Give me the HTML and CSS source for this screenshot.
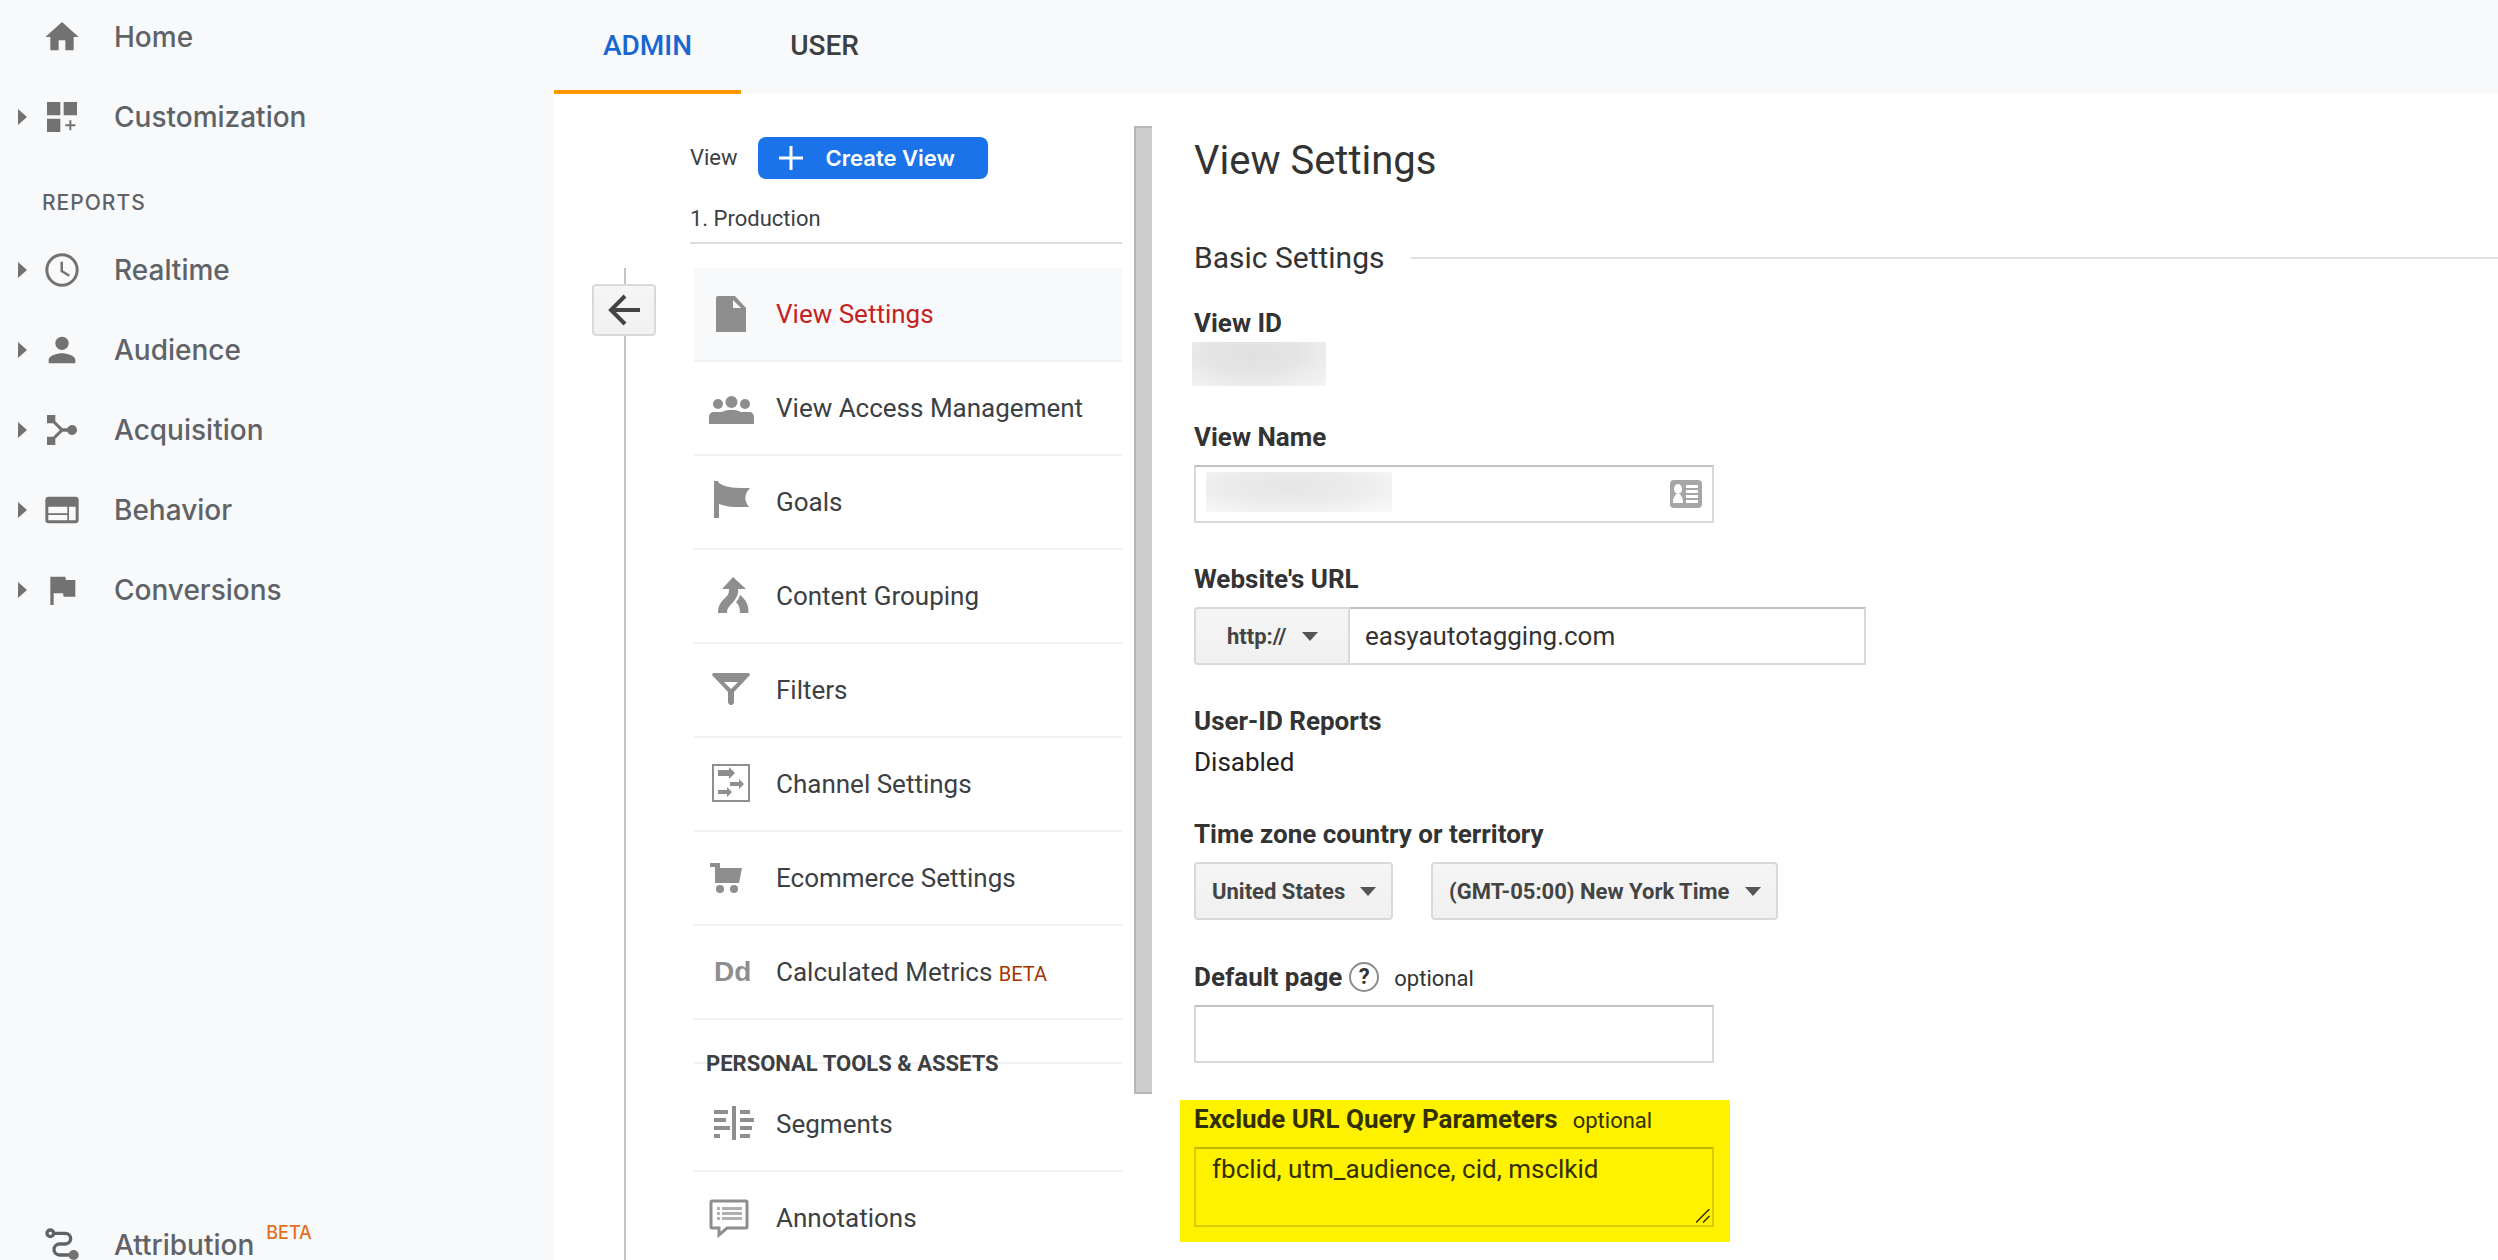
FILE: index.html
```html
<!DOCTYPE html>
<html lang="en">
<head>
<meta charset="utf-8">
<meta name="viewport" content="width=device-width, initial-scale=1">
<title>View Settings</title>
<link rel="stylesheet" href="styles.css">
</head>
<body>
<div class="app">
  <nav class="sidebar" aria-label="Reports">
    <a class="nav-item" href="#home">
      <span class="nav-caret"></span>
      <svg class="nav-icon" viewBox="0 0 24 24"><path d="M10 20v-6h4v6h5v-8h3L12 3 2 12h3v8z"/></svg>
      <span>Home</span>
    </a>
    <a class="nav-item" href="#customization">
      <span class="nav-caret nav-caret-on"></span>
      <svg class="nav-icon" viewBox="0 0 24 24"><path d="M3 3h8v8H3zM13 3h8v8h-8zM3 13h8v8H3zM16.400 14h1.200v2.400H20v1.200h-2.400V20h-1.200v-2.400H14v-1.200h2.400z"/></svg>
      <span>Customization</span>
    </a>
    <h2 class="nav-heading">REPORTS</h2>
    <a class="nav-item" href="#realtime">
      <span class="nav-caret nav-caret-on"></span>
      <svg class="nav-icon" viewBox="0 0 24 24"><path d="M12 2a10 10 0 1 0 0 20 10 10 0 0 0 0-20zm0 18.200a8.200 8.200 0 1 1 0-16.400 8.200 8.200 0 0 1 0 16.400zM12.600 7h-1.500v6l4.900 3 .8-1.200-4.200-2.500z"/></svg>
      <span>Realtime</span>
    </a>
    <a class="nav-item" href="#audience">
      <span class="nav-caret nav-caret-on"></span>
      <svg class="nav-icon" viewBox="0 0 24 24"><path d="M12 12a4 4 0 1 0 0-8 4 4 0 0 0 0 8zm0 2c-2.700 0-8 1.300-8 4v2h16v-2c0-2.700-5.300-4-8-4z"/></svg>
      <span>Audience</span>
    </a>
    <a class="nav-item" href="#acquisition">
      <span class="nav-caret nav-caret-on"></span>
      <svg class="nav-icon" viewBox="0 0 24 24"><path d="M3 3h5v3.800L12.300 11h2.900a3 3 0 1 1 0 2h-2.900L8 17.200V21H3v-5h3.700l4-4-4-4H3z"/></svg>
      <span>Acquisition</span>
    </a>
    <a class="nav-item" href="#behavior">
      <span class="nav-caret nav-caret-on"></span>
      <svg class="nav-icon" viewBox="0 0 24 24"><path fill-rule="evenodd" d="M4 4h16a2 2 0 0 1 2 2v12a2 2 0 0 1-2 2H4a2 2 0 0 1-2-2V6a2 2 0 0 1 2-2zm-.2 6v4h11.400v-4zm0 5v3.200h11.400V15zM16.200 10v8.200h4V10z"/></svg>
      <span>Behavior</span>
    </a>
    <a class="nav-item" href="#conversions">
      <span class="nav-caret nav-caret-on"></span>
      <svg class="nav-icon" viewBox="0 0 24 24"><path d="M14.400 6 14 4H5v17h2v-7h5.600l.4 2h7V6z"/></svg>
      <span>Conversions</span>
    </a>
    <a class="nav-item nav-item-last" href="#attribution">
      <span class="nav-caret"></span>
      <svg class="nav-icon" viewBox="0 0 24 24"><g fill="none" stroke="currentColor" stroke-width="2"><circle cx="5" cy="5" r="2"/><path d="M7.500 5h6.500a3.200 3.200 0 0 1 0 6.400h-3.500a3.300 3.300 0 0 0 0 6.600H18"/></g><circle cx="19" cy="18" r="3"/></svg>
      <span>Attribution</span>
      <sup class="nav-beta">BETA</sup>
    </a>
  </nav>

  <main class="main">
    <header class="tabs">
      <a class="tab tab-active" href="#admin">ADMIN</a>
      <a class="tab" href="#user">USER</a>
    </header>

    <div class="content">
      <div class="rail">
        <button class="back" type="button" aria-label="Back">
          <svg class="back-icon" viewBox="0 0 36 34"><path d="M34 17H5M19 3 5 17l14 14" fill="none" stroke="currentColor" stroke-width="4"/></svg>
        </button>
      </div>

      <section class="column">
        <div class="column-head">
          <span>View</span>
          <button class="create" type="button">
            <svg class="create-icon" viewBox="0 0 24 24"><path d="M12 0v24M0 12h24" stroke="currentColor" stroke-width="3"/></svg>
            Create View
          </button>
        </div>
        <div class="view-name">1. Production</div>

        <div class="menu">
          <a class="menu-item menu-item-active" href="#view-settings">
            <svg class="menu-icon" viewBox="0 0 56 44"><path fill-rule="evenodd" d="M14 4h17l11 12v24H12V6a2 2 0 0 1 2-2zm15 4v8h8z"/></svg>
            <span>View Settings</span>
          </a>
          <a class="menu-item" href="#access">
            <svg class="menu-icon" viewBox="0 0 56 44"><circle cx="14" cy="18" r="5"/><circle cx="41" cy="18" r="5"/><circle cx="27.500" cy="16" r="6"/><path d="M5 38v-7c0-3 2-5 5-5h8c6-3 13-3 19 0h8c3 0 5 2 5 5v7z"/></svg>
            <span>View Access Management</span>
          </a>
          <a class="menu-item" href="#goals">
            <svg class="menu-icon" viewBox="0 0 56 44"><path d="M10 1h4l1 2c8 5 16 5 31 5-6 6-6 13-1 19-12 0-20 1-30-3v14h-5z"/></svg>
            <span>Goals</span>
          </a>
          <a class="menu-item" href="#content-grouping">
            <svg class="menu-icon" viewBox="0 0 56 44"><path d="m29 3 13 12h-8c1 4-1 8-4 12-4 5-7 6-7 12h-9c0-9 4-12 8-16 3-3 3-5 3-8h-7zM36 21c6 5 8.500 9 8.500 18H36c0-5-1-8-4-11 2-2 3-4 4-7z"/></svg>
            <span>Content Grouping</span>
          </a>
          <a class="menu-item" href="#filters">
            <svg class="menu-icon" viewBox="0 0 56 44"><path fill-rule="evenodd" d="M9 5h36l1 2-16 17v11l-2 2h-2l-2-2V24L8 7zm11 9 7 7 7-7z"/></svg>
            <span>Filters</span>
          </a>
          <a class="menu-item" href="#channels">
            <svg class="menu-icon" viewBox="0 0 56 44"><path d="M9 3h36v36H9z" fill="none" stroke="currentColor" stroke-width="2"/><path d="M14 8h11V5l6 6-6 6v-3H14zM26 20h9v-3l5 5-5 5v-3h-9zM14 28h9v-3l5 5-5 5v-3h-9z"/></svg>
            <span>Channel Settings</span>
          </a>
          <a class="menu-item" href="#ecommerce">
            <svg class="menu-icon" viewBox="0 0 56 44"><path d="M6 7h10v5h22l-3 15H11V11H6z"/><circle cx="16" cy="33" r="4"/><circle cx="30" cy="33" r="4"/></svg>
            <span>Ecommerce Settings</span>
          </a>
          <a class="menu-item" href="#metrics">
            <span class="menu-icon menu-glyph" aria-hidden="true">Dd</span>
            <span>Calculated Metrics <span class="menu-beta">BETA</span></span>
          </a>
          <h3 class="menu-heading"><span class="menu-heading-text">PERSONAL TOOLS &amp; ASSETS</span></h3>
          <a class="menu-item" href="#segments">
            <svg class="menu-icon" viewBox="0 0 56 44"><path d="M28 4h4v34h-4zM10 8h14v4H10zM10 16h12v4H10zM10 24h16v4H10zM10 32h6v4h-6zM36 8h10v4H36zM36 16h14v4H36zM36 24h12v4H36zM36 32h10v4H36z"/></svg>
            <span>Segments</span>
          </a>
          <a class="menu-item" href="#annotations">
            <svg class="menu-icon" viewBox="0 0 56 44"><path d="M8 5h34a1 1 0 0 1 1 1v25a1 1 0 0 1-1 1H23l-8 7v-7H8a1 1 0 0 1-1-1V6a1 1 0 0 1 1-1z" fill="none" stroke="currentColor" stroke-width="3"/><path fill="#b0b0b0" d="M13 11h3v3h-3zM18 11h20v3H18zM13 16h3v3h-3zM18 16h20v3H18zM13 21h3v3h-3zM18 21h20v3H18z"/></svg>
            <span>Annotations</span>
          </a>
        </div>
      </section>

      <div class="divider"></div>

      <form class="settings">
        <h1 class="title">View Settings</h1>
        <h2 class="section-title">Basic Settings</h2>

        <div class="field field-id">
          <div class="label">View ID</div>
          <div class="redacted redacted-id"></div>
        </div>

        <div class="field">
          <label class="label" for="view-name">View Name</label>
          <div class="input-wrap">
            <input class="input" id="view-name" type="text">
            <span class="redacted redacted-name"></span>
            <svg class="card-icon" viewBox="0 0 32 28"><rect width="32" height="28" rx="4" fill="#a6a6a6"/><g fill="#fff"><ellipse cx="8" cy="9" rx="4" ry="5"/><path d="M3 23c0-6 2-7 3-9h4c1 2 3 3 3 9zM16 5h12v3H16zM16 10h12v3H16zM16 15h12v3H16zM16 20h12v3H16z"/></g></svg>
          </div>
        </div>

        <div class="field">
          <label class="label" for="site-url">Website's URL</label>
          <div class="url-row">
            <span class="select-wrap">
              <select class="select select-protocol" aria-label="Protocol"><option>http://</option></select>
            </span>
            <input class="input input-url" id="site-url" type="text" value="easyautotagging.com">
          </div>
        </div>

        <div class="field">
          <div class="label">User-ID Reports</div>
          <div class="value">Disabled</div>
        </div>

        <div class="field field-zone">
          <label class="label" for="country">Time zone country or territory</label>
          <div class="zone-row">
            <span class="select-wrap">
              <select class="select" id="country"><option>United States</option></select>
            </span>
            <span class="select-wrap">
              <select class="select" aria-label="Time zone"><option>(GMT-05:00) New York Time</option></select>
            </span>
          </div>
        </div>

        <div class="field field-page">
          <div class="label-row">
            <label class="label" for="default-page">Default page</label>
            <button class="help" type="button" aria-label="Help">?</button>
            <span class="optional">optional</span>
          </div>
          <input class="input" id="default-page" type="text">
        </div>

        <div class="highlight">
          <div class="label-row">
            <label class="label" for="exclude">Exclude URL Query Parameters</label>
            <span class="optional">optional</span>
          </div>
          <div class="input-wrap">
            <textarea class="input textarea" id="exclude">fbclid, utm_audience, cid, msclkid</textarea>
            <svg class="grip" viewBox="0 0 14 14"><path d="M0 13.500 13.500 0M7 13.500 13.500 7" stroke="currentColor" stroke-width="1.500"/></svg>
          </div>
        </div>
      </form>
    </div>
  </main>
</div>
</body>
</html>
```
FILE: styles.css
```css
* {
  box-sizing: border-box;
}

body {
  margin: 0;
  height: 100vh;
  overflow: hidden;
  background: #fff;
  color: #3c4043;
  font-family: Roboto, "Liberation Sans", sans-serif;
  font-size: 26px;
  line-height: 32px;
}

a {
  color: inherit;
  text-decoration: none;
}

button,
input,
select,
textarea {
  margin: 0;
  font-family: inherit;
}

h1,
h2,
h3 {
  margin: 0;
}

.app {
  display: flex;
  min-height: 100vh;
}

/* Sidebar */

.sidebar {
  display: flex;
  flex: none;
  flex-direction: column;
  gap: 28px;
  width: 554px;
  height: calc(100vh + 11px);
  padding-top: 11px;
  background: #f8f9fb;
  color: #5f6368;
  font-family: Inter, "Open Sans", sans-serif;
}

.nav-item {
  display: flex;
  flex: none;
  align-items: center;
  height: 52px;
  font-size: 28px;
  font-weight: 500;
}

.nav-caret {
  width: 24px;
  margin-left: 18px;
}

.nav-caret-on::before {
  display: block;
  width: 0;
  border-top: 8px solid transparent;
  border-bottom: 8px solid transparent;
  border-left: 9px solid #727272;
  content: "";
}

.nav-icon {
  width: 40px;
  height: 40px;
  margin-right: 32px;
  color: #5f6368;
  fill: #727272;
}

.nav-heading {
  margin: 19px 0 0 42px;
  font-size: 21px;
  font-weight: 500;
  line-height: 26px;
  letter-spacing: 1px;
}

.nav-item-last {
  margin-top: auto;
}

.nav-beta {
  align-self: flex-start;
  margin-left: 12px;
  color: #e37020;
  font-size: 18px;
  line-height: 28px;
}

/* Tabs */

.main {
  flex: 1;
  min-width: 0;
}

.tabs {
  display: flex;
  height: 94px;
  background: #f8f9fb;
}

.tab {
  padding: 30px 49px 0;
  border-bottom: 4px solid transparent;
  font-size: 28px;
  font-weight: 500;
}

.tab-active {
  border-color: #ff9800;
  color: #1967d2;
}

.content {
  display: flex;
  min-height: calc(100vh - 94px);
}

/* Back rail */

.rail {
  flex: none;
  width: 64px;
  margin: 174px 34px 0 38px;
  padding-top: 16px;
  background: linear-gradient(#c4c4c4, #c4c4c4) 32px 0 / 2px 100% no-repeat;
}

.back {
  display: flex;
  align-items: center;
  justify-content: center;
  width: 64px;
  height: 52px;
  padding: 0;
  border: 2px solid #d9d9d9;
  border-radius: 4px;
  background: linear-gradient(#f5f5f5, #f1f1f1);
  color: #444;
}

.back-icon {
  width: 36px;
  height: 34px;
}

/* View column */

.column {
  flex: none;
  width: 432px;
  padding-top: 43px;
}

.column-head {
  display: flex;
  align-items: center;
  gap: 20px;
  font-size: 22px;
}

.create {
  display: flex;
  align-items: center;
  gap: 23px;
  height: 42px;
  padding: 0 33px 0 21px;
  border: 0;
  border-radius: 8px;
  background: #1a73e8;
  color: #fff;
  font-family: Inter, "Open Sans", sans-serif;
  font-size: 22px;
  font-weight: 600;
}

.create-icon {
  width: 24px;
  height: 24px;
}

.view-name {
  margin-top: 27px;
  padding-bottom: 10px;
  border-bottom: 2px solid #dadce0;
  font-size: 22px;
  line-height: 26px;
}

.menu {
  margin: 24px 0 0 4px;
}

.menu-item {
  display: flex;
  align-items: center;
  gap: 16px;
  height: 94px;
  padding-left: 10px;
  border-bottom: 2px solid #f1f1f2;
}

.menu-item-active {
  background: #f8f9fb;
  color: #c5221f;
}

.menu-icon {
  flex: none;
  width: 56px;
  height: 44px;
  color: #8e8e8e;
  fill: #8e8e8e;
}

.menu-glyph {
  padding-left: 10px;
  font-family: "Liberation Sans", sans-serif;
  font-size: 28px;
  font-weight: 700;
  line-height: 44px;
}

.menu-beta {
  color: #a63300;
  font-size: 20px;
  line-height: 20px;
}

.menu-heading {
  padding: 31px 0 1px;
  font-size: 22px;
  font-weight: 700;
  line-height: 26px;
}

.menu-heading-text {
  display: block;
  padding-left: 12px;
  background: linear-gradient(#f1f1f2, #f1f1f2) 0 11px / 100% 2px no-repeat;
}

.divider {
  flex: none;
  width: 18px;
  height: 968px;
  margin: 32px 42px 0 12px;
  border: 2px solid #b7b7b7;
  border-right: 0;
  background: #cdcdcd;
}

/* Settings form */

.settings {
  flex: 1;
  min-width: 0;
  padding-top: 43px;
  color: #333;
}

.title {
  font-size: 40px;
  font-weight: 400;
  line-height: 48px;
}

.section-title {
  display: flex;
  align-items: center;
  gap: 27px;
  margin: 55px 0 31px;
  font-size: 30px;
  font-weight: 400;
  line-height: 36px;
}

.section-title::after {
  flex: 1;
  height: 2px;
  background: #e0e0e0;
  content: "";
}

.field {
  margin-bottom: 40px;
}

.field-id {
  margin-bottom: 35px;
}

.field-zone {
  margin-bottom: 41px;
}

.field-page {
  margin-bottom: 37px;
}

.label {
  display: block;
  font-weight: 700;
}

.label-row {
  display: flex;
  align-items: baseline;
  height: 32px;
}

.optional {
  margin-left: 15px;
  font-size: 22px;
}

.value {
  margin-top: 9px;
  color: #222;
}

.redacted-id {
  width: 134px;
  height: 44px;
  margin: 3px 0 0 -2px;
  background: radial-gradient(ellipse at 45% 25%, #e0e0e0, #e5e5e5 45%, #f5f5f5);
}

.input-wrap {
  display: flow-root;
  position: relative;
  width: 520px;
  max-width: 100%;
}

.redacted-name {
  position: absolute;
  top: 19px;
  left: 12px;
  width: 186px;
  height: 40px;
  background: radial-gradient(ellipse at 45% 35%, #e6e6e6, #ebebeb 45%, #fafafa);
}

.card-icon {
  position: absolute;
  top: 27px;
  right: 12px;
  width: 32px;
  height: 28px;
}

.input {
  display: block;
  width: 520px;
  max-width: 100%;
  height: 58px;
  margin-top: 12px;
  padding: 0 16px;
  border: 2px solid #d9d9d9;
  border-top-color: #c0c0c0;
  border-radius: 0;
  outline: 0;
  background: #fff;
  color: #333;
  font-size: 26px;
}

.url-row,
.zone-row {
  display: flex;
  margin-top: 12px;
}

.zone-row {
  gap: 38px;
}

.input-url {
  width: 516px;
  margin-top: 0;
  padding-left: 15px;
  border-left-width: 0;
}

.select-wrap {
  position: relative;
  display: flex;
}

.select-wrap::after {
  position: absolute;
  top: 25px;
  right: 17px;
  border-top: 9px solid #555;
  border-right: 8px solid transparent;
  border-left: 8px solid transparent;
  content: "";
  pointer-events: none;
}

.select {
  height: 58px;
  padding: 0 45px 0 16px;
  border: 2px solid #d9d9d9;
  border-radius: 4px;
  appearance: none;
  background: linear-gradient(#f5f5f5, #f0f0f0);
  color: #444;
  font-size: 22px;
  font-weight: 700;
}

.select-protocol {
  width: 156px;
  padding: 0 32px 0 31px;
  border-radius: 4px 0 0 4px;
}

.url-row .select-wrap::after {
  right: 32px;
}

.help {
  align-self: center;
  width: 30px;
  height: 30px;
  margin-left: 7px;
  padding: 0;
  border: 2px solid #8c8c8c;
  border-radius: 50%;
  background: #fff;
  color: #333;
  font-size: 22px;
  font-weight: 700;
  line-height: 26px;
}

.highlight {
  width: 550px;
  max-width: 100%;
  margin-left: -14px;
  padding: 3px 16px 15px 14px;
  background: #fff200;
  color: #333000;
}

.textarea {
  height: 80px;
  padding: 4px 16px;
  border-color: #d9cd00;
  border-top-color: #c0b500;
  background: transparent;
  color: #333000;
  line-height: 32px;
  resize: none;
}

.grip {
  position: absolute;
  right: 4px;
  bottom: 4px;
  width: 14px;
  height: 14px;
}
```
